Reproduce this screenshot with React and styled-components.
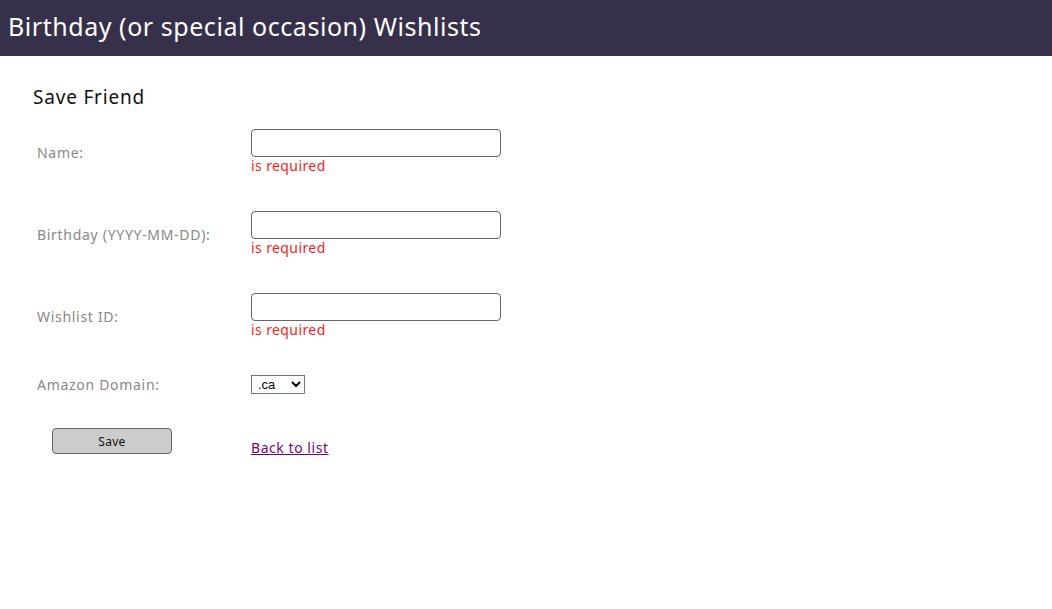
import React from 'react';
import styled, { createGlobalStyle } from 'styled-components';

const GlobalStyle = createGlobalStyle`
  body {
    margin: 0;
    background: #fff;
    font-family: "Noto Sans", "Open Sans", sans-serif;
  }
`;

const Header = styled.header`
  height: 56px;
  background: #36304a;
  display: flex;
  align-items: center;
  padding: 0 8px;
  box-sizing: border-box;
`;

const HeaderTitle = styled.h1`
  margin: 0;
  font-size: 25px;
  font-weight: 400;
  color: #fff;
  letter-spacing: 0.55px;
  line-height: 1;
  padding-bottom: 3px;
`;

const Main = styled.main`
  padding: 29px 33px;
`;

const Title = styled.h2`
  margin: 0;
  font-size: 19px;
  font-weight: 400;
  color: #111;
  letter-spacing: 0.8px;
  line-height: 24px;
`;

const Form = styled.form`
  display: grid;
  grid-template-columns: 214px 1fr;
  margin-left: 4px;
  margin-top: 2px;
`;

const Label = styled.label`
  display: flex;
  align-items: center;
  font-size: 14px;
  color: #888;
  letter-spacing: 0.7px;
`;

const Field = styled.div`
  display: flex;
  flex-direction: column;
  align-items: flex-start;
  padding: 18px 0;
`;

const Input = styled.input`
  width: 250px;
  height: 28px;
  box-sizing: border-box;
  border: 1px solid #666;
  border-radius: 4px;
  font-size: 14px;
  padding: 2px 6px;
  margin: 0;
`;

const Error = styled.span`
  color: #ff1a1a;
  font-size: 14px;
  line-height: 18px;
  letter-spacing: 0.4px;
`;

const Select = styled.select`
  width: 54px;
  height: 19px;
  font-family: "Liberation Sans", Arial, sans-serif;
  font-size: 13px;
  border: 1px solid #767676;
  border-radius: 0;
  background: #fff;
  padding: 0 0 0 2px;
  color: #000;
`;

const ButtonCell = styled.div`
  padding: 16px 0 0 15px;
`;

const SaveButton = styled.button`
  width: 120px;
  height: 26px;
  background: #cccccc;
  border: 1px solid #666;
  border-radius: 4px;
  font-family: "Noto Sans", sans-serif;
  font-size: 12px;
  letter-spacing: 0.3px;
  color: #111;
  cursor: pointer;
`;

const BackLink = styled.a`
  color: #800080;
  font-size: 14px;
  letter-spacing: 0.55px;
  text-decoration: underline;
  padding-top: 26px;
  display: inline-block;
`;

const fields = [
  { id: 'name', label: 'Name:' },
  { id: 'birthday', label: 'Birthday (YYYY-MM-DD):' },
  { id: 'wishlist', label: 'Wishlist ID:' },
];

export default function App() {
  return (
    <>
      <GlobalStyle />
      <Header>
        <HeaderTitle>Birthday (or special occasion) Wishlists</HeaderTitle>
      </Header>
      <Main>
        <Title>Save Friend</Title>
        <Form onSubmit={e => e.preventDefault()}>
          {fields.map(f => (
            <React.Fragment key={f.id}>
              <Label htmlFor={f.id}>{f.label}</Label>
              <Field>
                <Input id={f.id} type="text" />
                <Error>is required</Error>
              </Field>
            </React.Fragment>
          ))}
          <Label htmlFor="domain">Amazon Domain:</Label>
          <Field>
            <Select id="domain" defaultValue="ca">
              <option value="ca">.ca</option>
              <option value="com">.com</option>
            </Select>
          </Field>
          <ButtonCell>
            <SaveButton type="submit">Save</SaveButton>
          </ButtonCell>
          <div>
            <BackLink href="#">Back to list</BackLink>
          </div>
        </Form>
      </Main>
    </>
  );
}
